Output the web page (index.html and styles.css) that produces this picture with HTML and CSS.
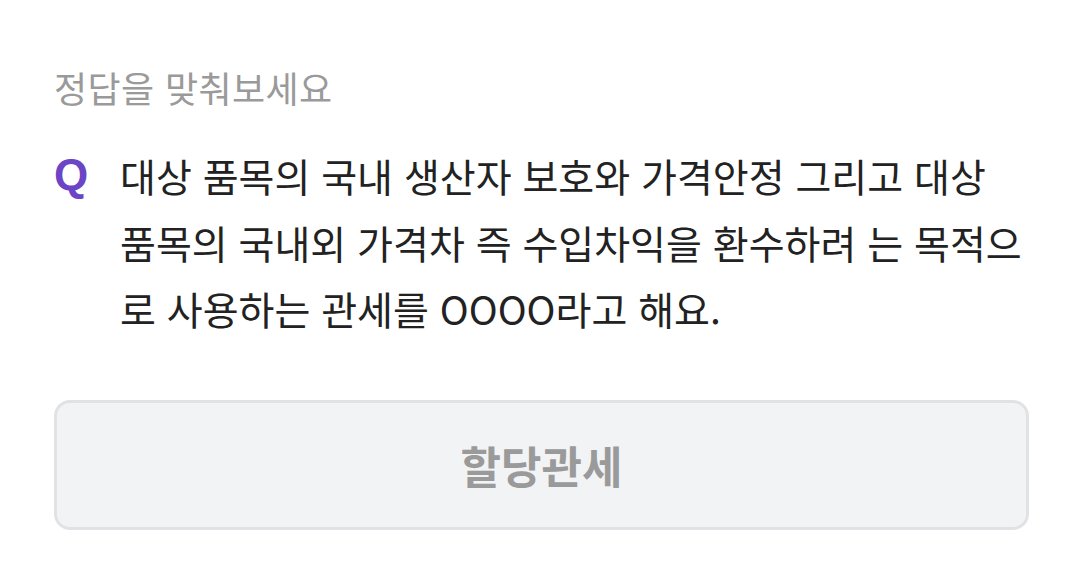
FILE: index.html
```html
<!DOCTYPE html>
<html lang="ko">
<head>
<meta charset="utf-8">
<link rel="stylesheet" href="styles.css">
</head>
<body>
<main class="quiz">
  <p class="label">정답을 맞춰보세요</p>
  <div class="question">
    <span class="q-mark">Q</span>
    <p class="q-text">대상 품목의 국내 생산자 보호와 가격안정 그리고 대상 품목의 국내외 가격차 즉 수입차익을 환수하려 는 목적으로 사용하는 관세를 OOOO라고 해요.</p>
  </div>
  <div class="answer">할당관세</div>
</main>
</body>
</html>
```

FILE: styles.css
```css
* { box-sizing: border-box; }
html, body { margin: 0; padding: 0; background: #fff; }
body {
  font-family: "Noto Sans CJK KR", "Noto Sans", sans-serif;
  width: 1079px;
  height: 569px;
  overflow: hidden;
}
.quiz {
  padding: 64px 50px 0 54px;
  display: flex;
  flex-direction: column;
}
.label {
  margin: 0;
  font-size: 36px;
  letter-spacing: 0.4px;
  line-height: 46px;
  color: #9a9a9a;
}
.question {
  display: flex;
  margin-top: 32px;
  gap: 30px;
}
.q-mark {
  font-family: "Liberation Sans", Arial, sans-serif;
  font-weight: 700;
  font-size: 44px;
  line-height: 66px;
  color: #6b45c6;
  width: 36px;
  flex: none;
}
.q-text {
  margin: 0;
  font-size: 39px;
  line-height: 66.5px;
  color: #222;
  word-break: break-all;
  flex: 1;
}
.answer {
  margin-top: 58px;
  height: 130px;
  border: 3px solid #e1e2e5;
  background: #f2f3f5;
  border-radius: 16px;
  display: flex;
  align-items: center;
  justify-content: center;
  font-size: 44px;
  font-weight: 700;
  color: #9a9a9a;
}
```
